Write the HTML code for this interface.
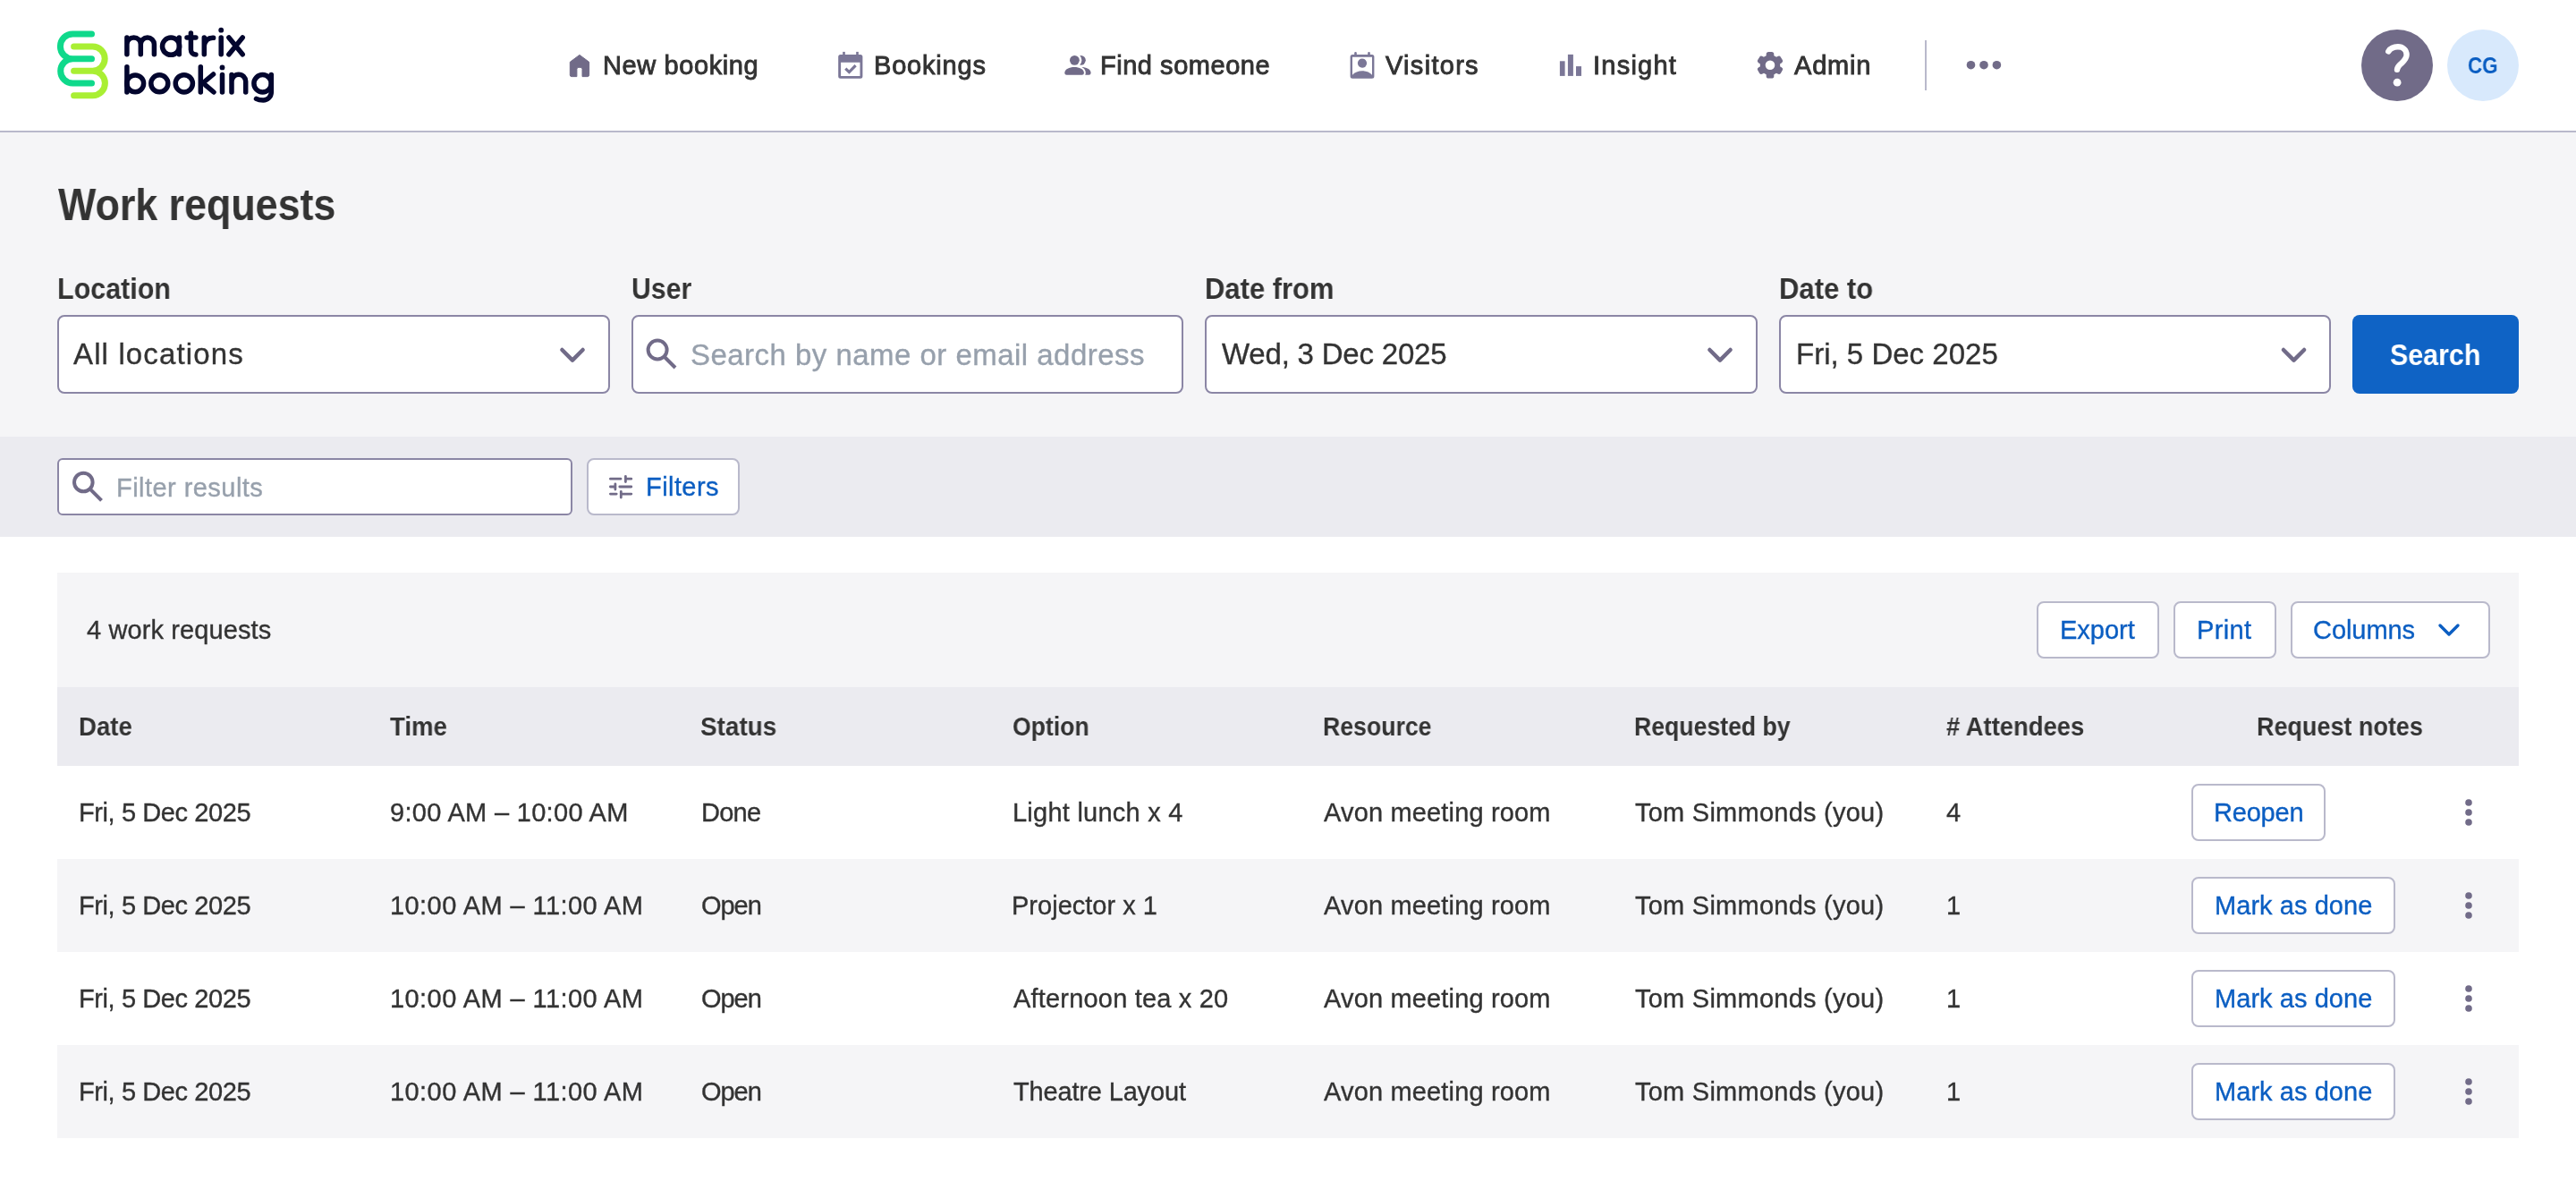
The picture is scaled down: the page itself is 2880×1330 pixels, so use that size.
<!DOCTYPE html>
<html><head><meta charset="utf-8">
<style>
html,body{margin:0;padding:0;}
body{width:2880px;height:1330px;overflow:hidden;position:relative;background:#fff;font-family:"Liberation Sans",sans-serif;color:#333333;}
.a{position:absolute;}
.t{will-change:transform;position:absolute;white-space:nowrap;line-height:40px;}
.r{font-size:28.5px;letter-spacing:0.6px;}
.b{font-size:28.5px;font-weight:700;letter-spacing:-0.5px;}
.nav{font-size:28.5px;letter-spacing:0.8px;-webkit-text-stroke:0.6px #303234;}
.blue{color:#0b5ec2;}
.box{position:absolute;box-sizing:border-box;background:#fff;border:2px solid #8b86a5;border-radius:8px;}
.btn{position:absolute;box-sizing:border-box;background:#fff;border:2px solid #b9b9cb;border-radius:8px;}
svg{position:absolute;overflow:visible;}
</style></head>
<body>
<!-- header -->
<div class="a" style="left:0;top:0;width:2880px;height:146px;background:#fff;"></div>
<div class="a" style="left:0;top:146px;width:2880px;height:2px;background:#b9b9cb;"></div>
<!-- page bg -->
<div class="a" style="left:0;top:148px;width:2880px;height:340px;background:#f5f5f7;"></div>
<div class="a" style="left:0;top:488px;width:2880px;height:112px;background:#ebebf0;"></div>

<!-- logo -->
<svg style="left:0;top:0" width="2880" height="146" viewBox="0 0 2880 146">
 <g fill="none" stroke-linecap="round" stroke-linejoin="round">
  <path d="M102.5 38 H81.3 A13.9 13.9 0 0 0 81.3 65.8 H102.5 M81.3 65.8 A13.6 13.6 0 0 0 81.3 93 H102.5" stroke="#0fd98b" stroke-width="7"/>
  <path d="M82.6 52 H103.6 A13.6 13.6 0 0 1 103.6 79.2 H82.6 M103.6 79.2 A13.8 13.8 0 0 1 103.6 106.8 H82.6" stroke="#a9ef33" stroke-width="7"/>
  <g stroke="#03062e" stroke-width="5.5">
   <path d="M141.9 60.8 V41.9 M141.9 49.6 A7.7 7.7 0 0 1 157.3 49.6 V60.8 M157.3 49.6 A7.55 7.55 0 0 1 172.4 49.6 V60.8"/>
   <circle cx="191.1" cy="51.7" r="9.6"/>
   <path d="M200.3 41.9 V60.8"/>
   <path d="M213.4 36.9 V55.6 A5.5 5.5 0 0 0 218.9 61.1 M209 42.1 H218.9"/>
   <path d="M228.3 60.8 V41.9 M228.3 51 Q230 41.9 238.6 42.3"/>
   <path d="M247.2 41.9 V60.8"/>
   <path d="M255.9 41.9 L271.2 60.8 M271.2 41.9 L255.9 60.8"/>
   <path d="M141.9 74.7 V103.1"/>
   <circle cx="151.2" cy="93.3" r="9.4"/>
   <circle cx="178.3" cy="93.3" r="9.5"/>
   <circle cx="205.8" cy="93.3" r="9.6"/>
   <path d="M224.3 74.7 V103.1 M238.5 83 L226.6 93 M230 95.4 L239 103"/>
   <path d="M248.5 83.5 V103.1"/>
   <path d="M259 103.1 V83.5 M259 91 A7.85 7.85 0 0 1 274.7 91 V103.1"/>
   <circle cx="293.6" cy="93.3" r="9.7"/>
   <path d="M303.3 83.5 V103 A9 9 0 0 1 294.3 112 Q289.5 112 286.5 110.3"/>
  </g>
  <g fill="#03062e" stroke="none"><circle cx="247.2" cy="33.7" r="2.9"/><circle cx="248.5" cy="75.4" r="2.9"/></g>
 </g>
</svg>

<!-- nav icons -->
<svg style="left:0;top:0" width="2880" height="146" viewBox="0 0 2880 146">
 <g fill="#716b88">
  <!-- house -->
  <path d="M647.95 61.4 L658.6 69.3 V83.8 Q658.6 85.6 656.8 85.6 H651 V77.3 Q651 75.3 649 75.3 H646.9 Q644.9 75.3 644.9 77.3 V85.6 H639.1 Q637.3 85.6 637.3 83.8 V69.3 Z" stroke="#716b88" stroke-width="1" stroke-linejoin="round"/>
  <!-- calendar -->
  <g fill="#7b7797">
  <rect x="942.2" y="57.9" width="2.6" height="4" />
  <rect x="957.2" y="57.9" width="2.6" height="4" />
  <path fill-rule="evenodd" d="M939.7 61.1 H961.9 Q964.4 61.1 964.4 63.6 V85.3 Q964.4 87.8 961.9 87.8 H939.7 Q937.2 87.8 937.2 85.3 V63.6 Q937.2 61.1 939.7 61.1 Z M940.1 69.8 V84.9 H961.5 V69.8 Z"/>
  <path d="M945.3 76.6 L949.4 80.6 L956.6 73.2" fill="none" stroke="#7b7797" stroke-width="3.2"/>
  </g>
  <!-- people -->
  <circle cx="1208.4" cy="67.35" r="5.4"/>
  <path transform="translate(7.7 0)" d="M1190.3 81.6 C1190.3 77.3 1195.5 75 1201.1 75 C1206.7 75 1211.9 77.3 1211.9 81.6 Q1211.9 83.8 1209.7 83.8 H1192.5 Q1190.3 83.8 1190.3 81.6 Z"/>
  <circle cx="1201.4" cy="67.35" r="5.4" stroke="#fff" stroke-width="5.2" style="paint-order:stroke"/>
  <path d="M1190.3 81.6 C1190.3 77.3 1195.5 75 1201.1 75 C1206.7 75 1211.9 77.3 1211.9 81.6 Q1211.9 83.8 1209.7 83.8 H1192.5 Q1190.3 83.8 1190.3 81.6 Z" stroke="#fff" stroke-width="3.8" style="paint-order:stroke"/>
  <!-- visitors -->
  <g fill="#7b7797">
  <rect x="1514.2" y="58.1" width="2.6" height="4" rx="1.3"/>
  <rect x="1529.2" y="58.1" width="2.6" height="4" rx="1.3"/>
  <path fill-rule="evenodd" d="M1512.1 61 H1533.9 Q1536.4 61 1536.4 63.5 V85.2 Q1536.4 87.7 1533.9 87.7 H1512.1 Q1509.6 87.7 1509.6 85.2 V63.5 Q1509.6 61 1512.1 61 Z M1512 63.7 V85.3 H1534 V63.7 Z"/>
  <circle cx="1523" cy="70.6" r="5.1"/>
  <path d="M1512 83.8 C1514.5 80.7 1518.5 79.2 1523 79.2 C1527.5 79.2 1531.5 80.7 1534 83.8 V86 H1512 Z"/>
  </g>
  <!-- insight -->
  <g fill="#7b7797">
  <rect x="1743.9" y="68.3" width="5.7" height="16.6"/>
  <rect x="1752.9" y="60.9" width="6" height="24"/>
  <rect x="1762" y="74.1" width="6" height="10.8"/>
  </g>
  <!-- gear -->
  <g transform="translate(1979 72.8)">
   <circle r="11.2"/>
   <rect x="-4.3" y="-14.8" width="8.6" height="10" rx="2.6"/>
   <rect x="-4.3" y="-14.8" width="8.6" height="10" rx="2.6" transform="rotate(60)"/>
   <rect x="-4.3" y="-14.8" width="8.6" height="10" rx="2.6" transform="rotate(120)"/>
   <rect x="-4.3" y="-14.8" width="8.6" height="10" rx="2.6" transform="rotate(180)"/>
   <rect x="-4.3" y="-14.8" width="8.6" height="10" rx="2.6" transform="rotate(240)"/>
   <rect x="-4.3" y="-14.8" width="8.6" height="10" rx="2.6" transform="rotate(300)"/>
   <circle r="5.3" fill="#fff"/>
  </g>
  <!-- divider -->
  <rect x="2152" y="45" width="2" height="56" fill="#b9b9cb"/>
  <!-- dots -->
  <circle cx="2203.5" cy="72.7" r="4.8"/>
  <circle cx="2218" cy="72.7" r="4.8"/>
  <circle cx="2232.4" cy="72.7" r="4.8"/>
  <!-- help -->
  <circle cx="2680" cy="73" r="40"/>
  <path d="M2670.3 57.4 C2672.6 53.9 2676.5 52.3 2680.8 52.3 C2686.5 52.3 2690.6 56 2690.6 61.3 C2690.6 66.3 2686.3 69.2 2683.4 72.1 C2681.1 74.4 2680.1 76 2680 77.9" fill="none" stroke="#fff" stroke-width="6.4" stroke-linecap="round"/>
  <circle cx="2680.1" cy="92.2" r="4.4" fill="#fff"/>
  <!-- avatar -->
  <circle cx="2776" cy="73" r="40" fill="#d8e9fc"/>
 </g>
</svg>


<!-- title & form -->

<div class="box" style="left:64px;top:352px;width:617.5px;height:88px;"></div>
<div class="box" style="left:705.5px;top:352px;width:617.5px;height:88px;"></div>
<div class="box" style="left:1347px;top:352px;width:617.5px;height:88px;"></div>
<div class="box" style="left:1988.5px;top:352px;width:617.5px;height:88px;"></div>
<div class="a" style="left:2630px;top:352px;width:186px;height:88px;background:#0f63c5;border-radius:8px;"></div>


<svg style="left:0;top:0" width="2880" height="600" viewBox="0 0 2880 600">
 <g fill="none" stroke="#716b88" stroke-width="4.5" stroke-linecap="round" stroke-linejoin="round">
  <path d="M628.4 391 L640 402.6 L651.6 391"/>
  <path d="M1911.4 391 L1923 402.6 L1934.6 391"/>
  <path d="M2552.9 391 L2564.5 402.6 L2576.1 391"/>
 </g>
 <g fill="none" stroke="#716b88" stroke-width="4">
  <circle cx="735.1" cy="391" r="10.5"/>
  <path d="M743 399 L755 411"/>
 </g>
</svg>

<!-- filter bar -->
<div class="box" style="left:64px;top:512px;width:576px;height:64px;border-radius:6px;"></div>
<svg style="left:0;top:0" width="2880" height="600" viewBox="0 0 2880 600">
 <g fill="none" stroke="#716b88" stroke-width="4">
  <circle cx="93.3" cy="539" r="10.3"/>
  <path d="M101 546.8 L113.5 559.3"/>
 </g>
</svg>
<div class="btn" style="left:656px;top:512px;width:171px;height:64px;"></div>
<svg style="left:0;top:0" width="2880" height="600" viewBox="0 0 2880 600">
 <g fill="none" stroke="#716b88" stroke-width="2.8" stroke-linecap="round">
  <path d="M682.4 535.2 H694 M699.4 532.3 V538.6 M699.4 535.2 H705.8"/>
  <path d="M682.4 544 H687.9 M687.9 540.8 V547 M692.8 544 H705.8"/>
  <path d="M682.4 552.1 H689.2 M694.3 549.3 V556 M694.3 552.1 H705.8"/>
 </g>
</svg>

<!-- card -->
<div class="a" style="left:64px;top:640px;width:2752px;height:128px;background:#f5f5f7;"></div>
<div class="btn" style="left:2277px;top:672px;width:137px;height:64px;"></div>
<div class="btn" style="left:2430px;top:672px;width:115px;height:64px;"></div>
<div class="btn" style="left:2561px;top:672px;width:223px;height:64px;"></div>
<svg style="left:0;top:0" width="2880" height="800" viewBox="0 0 2880 800">
 <path d="M2728 699 L2738 709 L2748 699" fill="none" stroke="#0b5ec2" stroke-width="3.4" stroke-linecap="round" stroke-linejoin="round"/>
</svg>

<div class="a" style="left:64px;top:768px;width:2752px;height:88px;background:#ebebf0;"></div>

<div class="a" style="left:64px;top:960px;width:2752px;height:104px;background:#f5f5f7;"></div>
<div class="a" style="left:64px;top:1168px;width:2752px;height:104px;background:#f5f5f7;"></div>

<div class="btn" style="left:2450px;top:876px;width:150px;height:64px;"></div>
<svg style="left:2752px;top:892px" width="16" height="32" viewBox="0 0 16 32"><g fill="#716b88"><circle cx="8" cy="5" r="3.8"/><circle cx="8" cy="16" r="3.8"/><circle cx="8" cy="27" r="3.8"/></g></svg>
<div class="btn" style="left:2450px;top:980px;width:228px;height:64px;"></div>
<svg style="left:2752px;top:996px" width="16" height="32" viewBox="0 0 16 32"><g fill="#716b88"><circle cx="8" cy="5" r="3.8"/><circle cx="8" cy="16" r="3.8"/><circle cx="8" cy="27" r="3.8"/></g></svg>
<div class="btn" style="left:2450px;top:1084px;width:228px;height:64px;"></div>
<svg style="left:2752px;top:1100px" width="16" height="32" viewBox="0 0 16 32"><g fill="#716b88"><circle cx="8" cy="5" r="3.8"/><circle cx="8" cy="16" r="3.8"/><circle cx="8" cy="27" r="3.8"/></g></svg>
<div class="btn" style="left:2450px;top:1188px;width:228px;height:64px;"></div>
<svg style="left:2752px;top:1204px" width="16" height="32" viewBox="0 0 16 32"><g fill="#716b88"><circle cx="8" cy="5" r="3.8"/><circle cx="8" cy="16" r="3.8"/><circle cx="8" cy="27" r="3.8"/></g></svg>
<div class="t" style="left:2759.00px;top:53.39px;font-size:25.7px;font-weight:700;color:#0b5ec2;transform:scaleX(0.8719);transform-origin:0 0;">CG</div>
<div class="t" style="left:674.00px;top:52.75px;font-size:29px;letter-spacing:0.600px;-webkit-text-stroke:0.9px #333333;">New booking</div>
<div class="t" style="left:977.00px;top:52.75px;font-size:29px;letter-spacing:0.802px;-webkit-text-stroke:0.9px #333333;">Bookings</div>
<div class="t" style="left:1230.00px;top:52.75px;font-size:29px;letter-spacing:0.529px;-webkit-text-stroke:0.9px #333333;">Find someone</div>
<div class="t" style="left:1549.00px;top:52.75px;font-size:29px;letter-spacing:1.295px;-webkit-text-stroke:0.9px #333333;">Visitors</div>
<div class="t" style="left:1781.00px;top:52.75px;font-size:29px;letter-spacing:1.235px;-webkit-text-stroke:0.9px #333333;">Insight</div>
<div class="t" style="left:2006.00px;top:52.75px;font-size:29px;letter-spacing:0.800px;-webkit-text-stroke:0.9px #333333;">Admin</div>
<div class="t" style="left:65.00px;top:208.70px;font-size:49.6px;font-weight:700;transform:scaleX(0.9032);transform-origin:0 0;">Work requests</div>
<div class="t" style="left:64.00px;top:302.56px;font-size:33px;font-weight:700;transform:scaleX(0.9231);transform-origin:0 0;">Location</div>
<div class="t" style="left:705.50px;top:302.56px;font-size:33px;font-weight:700;transform:scaleX(0.9159);transform-origin:0 0;">User</div>
<div class="t" style="left:1347.00px;top:302.56px;font-size:33px;font-weight:700;transform:scaleX(0.9375);transform-origin:0 0;">Date from</div>
<div class="t" style="left:1988.50px;top:302.56px;font-size:33px;font-weight:700;transform:scaleX(0.9396);transform-origin:0 0;">Date to</div>
<div class="t" style="left:2672.00px;top:377.06px;font-size:33px;font-weight:700;color:#fff;transform:scaleX(0.9209);transform-origin:0 0;">Search</div>
<div class="t" style="left:82.00px;top:376.36px;font-size:33px;letter-spacing:1.138px;-webkit-text-stroke:0.35px #333333;">All locations</div>
<div class="t" style="left:772.00px;top:376.56px;font-size:33px;color:#97a0ac;letter-spacing:0.469px;-webkit-text-stroke:0.35px #97a0ac;">Search by name or email address</div>
<div class="t" style="left:1366.00px;top:376.36px;font-size:33px;letter-spacing:-0.201px;-webkit-text-stroke:0.35px #333333;">Wed, 3 Dec 2025</div>
<div class="t" style="left:2007.50px;top:376.36px;font-size:33px;letter-spacing:0.011px;-webkit-text-stroke:0.35px #333333;">Fri, 5 Dec 2025</div>
<div class="t" style="left:130.00px;top:524.95px;font-size:29px;color:#97a0ac;letter-spacing:0.452px;-webkit-text-stroke:0.35px #97a0ac;">Filter results</div>
<div class="t" style="left:721.50px;top:523.95px;font-size:29px;color:#0b5ec2;letter-spacing:0.429px;-webkit-text-stroke:0.35px #0b5ec2;">Filters</div>
<div class="t" style="left:96.50px;top:684.25px;font-size:29px;letter-spacing:0.103px;-webkit-text-stroke:0.35px #333333;">4 work requests</div>
<div class="t" style="left:2303.00px;top:684.05px;font-size:29px;color:#0b5ec2;-webkit-text-stroke:0.35px #0b5ec2;">Export</div>
<div class="t" style="left:2456.00px;top:684.05px;font-size:29px;color:#0b5ec2;letter-spacing:0.350px;-webkit-text-stroke:0.35px #0b5ec2;">Print</div>
<div class="t" style="left:2586.00px;top:684.05px;font-size:29px;color:#0b5ec2;letter-spacing:-0.065px;-webkit-text-stroke:0.35px #0b5ec2;">Columns</div>
<div class="t" style="left:88.00px;top:791.95px;font-size:29px;font-weight:700;transform:scaleX(0.9513);transform-origin:0 0;">Date</div>
<div class="t" style="left:436.00px;top:791.95px;font-size:29px;font-weight:700;transform:scaleX(0.9508);transform-origin:0 0;">Time</div>
<div class="t" style="left:783.00px;top:791.95px;font-size:29px;font-weight:700;transform:scaleX(0.9618);transform-origin:0 0;">Status</div>
<div class="t" style="left:1132.00px;top:791.95px;font-size:29px;font-weight:700;transform:scaleX(0.9167);transform-origin:0 0;">Option</div>
<div class="t" style="left:1479.00px;top:791.95px;font-size:29px;font-weight:700;transform:scaleX(0.9189);transform-origin:0 0;">Resource</div>
<div class="t" style="left:1827.00px;top:791.95px;font-size:29px;font-weight:700;transform:scaleX(0.9182);transform-origin:0 0;">Requested by</div>
<div class="t" style="left:2176.00px;top:791.95px;font-size:29px;font-weight:700;transform:scaleX(0.9437);transform-origin:0 0;"># Attendees</div>
<div class="t" style="left:2523.00px;top:791.95px;font-size:29px;font-weight:700;transform:scaleX(0.9300);transform-origin:0 0;">Request notes</div>
<div class="t" style="left:88.00px;top:888.15px;font-size:29px;letter-spacing:-0.398px;-webkit-text-stroke:0.35px #333333;">Fri, 5 Dec 2025</div>
<div class="t" style="left:436.00px;top:888.15px;font-size:29px;letter-spacing:0.308px;-webkit-text-stroke:0.35px #333333;">9:00 AM – 10:00 AM</div>
<div class="t" style="left:784.00px;top:888.15px;font-size:29px;letter-spacing:-0.731px;-webkit-text-stroke:0.35px #333333;">Done</div>
<div class="t" style="left:1132.00px;top:888.15px;font-size:29px;letter-spacing:0.240px;-webkit-text-stroke:0.35px #333333;">Light lunch x 4</div>
<div class="t" style="left:1480.00px;top:888.15px;font-size:29px;letter-spacing:0.162px;-webkit-text-stroke:0.35px #333333;">Avon meeting room</div>
<div class="t" style="left:1828.00px;top:888.15px;font-size:29px;letter-spacing:0.243px;-webkit-text-stroke:0.35px #333333;">Tom Simmonds (you)</div>
<div class="t" style="left:2176.00px;top:888.15px;font-size:29px;letter-spacing:0.600px;-webkit-text-stroke:0.35px #333333;">4</div>
<div class="t" style="left:2475.00px;top:888.15px;font-size:29px;color:#0b5ec2;letter-spacing:-0.200px;-webkit-text-stroke:0.35px #0b5ec2;">Reopen</div>
<div class="t" style="left:88.00px;top:992.15px;font-size:29px;letter-spacing:-0.398px;-webkit-text-stroke:0.35px #333333;">Fri, 5 Dec 2025</div>
<div class="t" style="left:436.00px;top:992.15px;font-size:29px;letter-spacing:0.434px;-webkit-text-stroke:0.35px #333333;">10:00 AM – 11:00 AM</div>
<div class="t" style="left:784.00px;top:992.15px;font-size:29px;letter-spacing:-1.063px;-webkit-text-stroke:0.35px #333333;">Open</div>
<div class="t" style="left:1131.00px;top:992.15px;font-size:29px;letter-spacing:0.016px;-webkit-text-stroke:0.35px #333333;">Projector x 1</div>
<div class="t" style="left:1480.00px;top:992.15px;font-size:29px;letter-spacing:0.162px;-webkit-text-stroke:0.35px #333333;">Avon meeting room</div>
<div class="t" style="left:1828.00px;top:992.15px;font-size:29px;letter-spacing:0.243px;-webkit-text-stroke:0.35px #333333;">Tom Simmonds (you)</div>
<div class="t" style="left:2176.00px;top:992.15px;font-size:29px;letter-spacing:0.600px;-webkit-text-stroke:0.35px #333333;">1</div>
<div class="t" style="left:2476.00px;top:992.15px;font-size:29px;color:#0b5ec2;letter-spacing:0.055px;-webkit-text-stroke:0.35px #0b5ec2;">Mark as done</div>
<div class="t" style="left:88.00px;top:1096.15px;font-size:29px;letter-spacing:-0.398px;-webkit-text-stroke:0.35px #333333;">Fri, 5 Dec 2025</div>
<div class="t" style="left:436.00px;top:1096.15px;font-size:29px;letter-spacing:0.434px;-webkit-text-stroke:0.35px #333333;">10:00 AM – 11:00 AM</div>
<div class="t" style="left:784.00px;top:1096.15px;font-size:29px;letter-spacing:-1.063px;-webkit-text-stroke:0.35px #333333;">Open</div>
<div class="t" style="left:1133.00px;top:1096.15px;font-size:29px;letter-spacing:0.189px;-webkit-text-stroke:0.35px #333333;">Afternoon tea x 20</div>
<div class="t" style="left:1480.00px;top:1096.15px;font-size:29px;letter-spacing:0.162px;-webkit-text-stroke:0.35px #333333;">Avon meeting room</div>
<div class="t" style="left:1828.00px;top:1096.15px;font-size:29px;letter-spacing:0.243px;-webkit-text-stroke:0.35px #333333;">Tom Simmonds (you)</div>
<div class="t" style="left:2176.00px;top:1096.15px;font-size:29px;letter-spacing:0.600px;-webkit-text-stroke:0.35px #333333;">1</div>
<div class="t" style="left:2476.00px;top:1096.15px;font-size:29px;color:#0b5ec2;letter-spacing:0.055px;-webkit-text-stroke:0.35px #0b5ec2;">Mark as done</div>
<div class="t" style="left:88.00px;top:1200.15px;font-size:29px;letter-spacing:-0.398px;-webkit-text-stroke:0.35px #333333;">Fri, 5 Dec 2025</div>
<div class="t" style="left:436.00px;top:1200.15px;font-size:29px;letter-spacing:0.434px;-webkit-text-stroke:0.35px #333333;">10:00 AM – 11:00 AM</div>
<div class="t" style="left:784.00px;top:1200.15px;font-size:29px;letter-spacing:-1.063px;-webkit-text-stroke:0.35px #333333;">Open</div>
<div class="t" style="left:1133.00px;top:1200.15px;font-size:29px;letter-spacing:-0.164px;-webkit-text-stroke:0.35px #333333;">Theatre Layout</div>
<div class="t" style="left:1480.00px;top:1200.15px;font-size:29px;letter-spacing:0.162px;-webkit-text-stroke:0.35px #333333;">Avon meeting room</div>
<div class="t" style="left:1828.00px;top:1200.15px;font-size:29px;letter-spacing:0.243px;-webkit-text-stroke:0.35px #333333;">Tom Simmonds (you)</div>
<div class="t" style="left:2176.00px;top:1200.15px;font-size:29px;letter-spacing:0.600px;-webkit-text-stroke:0.35px #333333;">1</div>
<div class="t" style="left:2476.00px;top:1200.15px;font-size:29px;color:#0b5ec2;letter-spacing:0.055px;-webkit-text-stroke:0.35px #0b5ec2;">Mark as done</div>
</body></html>
